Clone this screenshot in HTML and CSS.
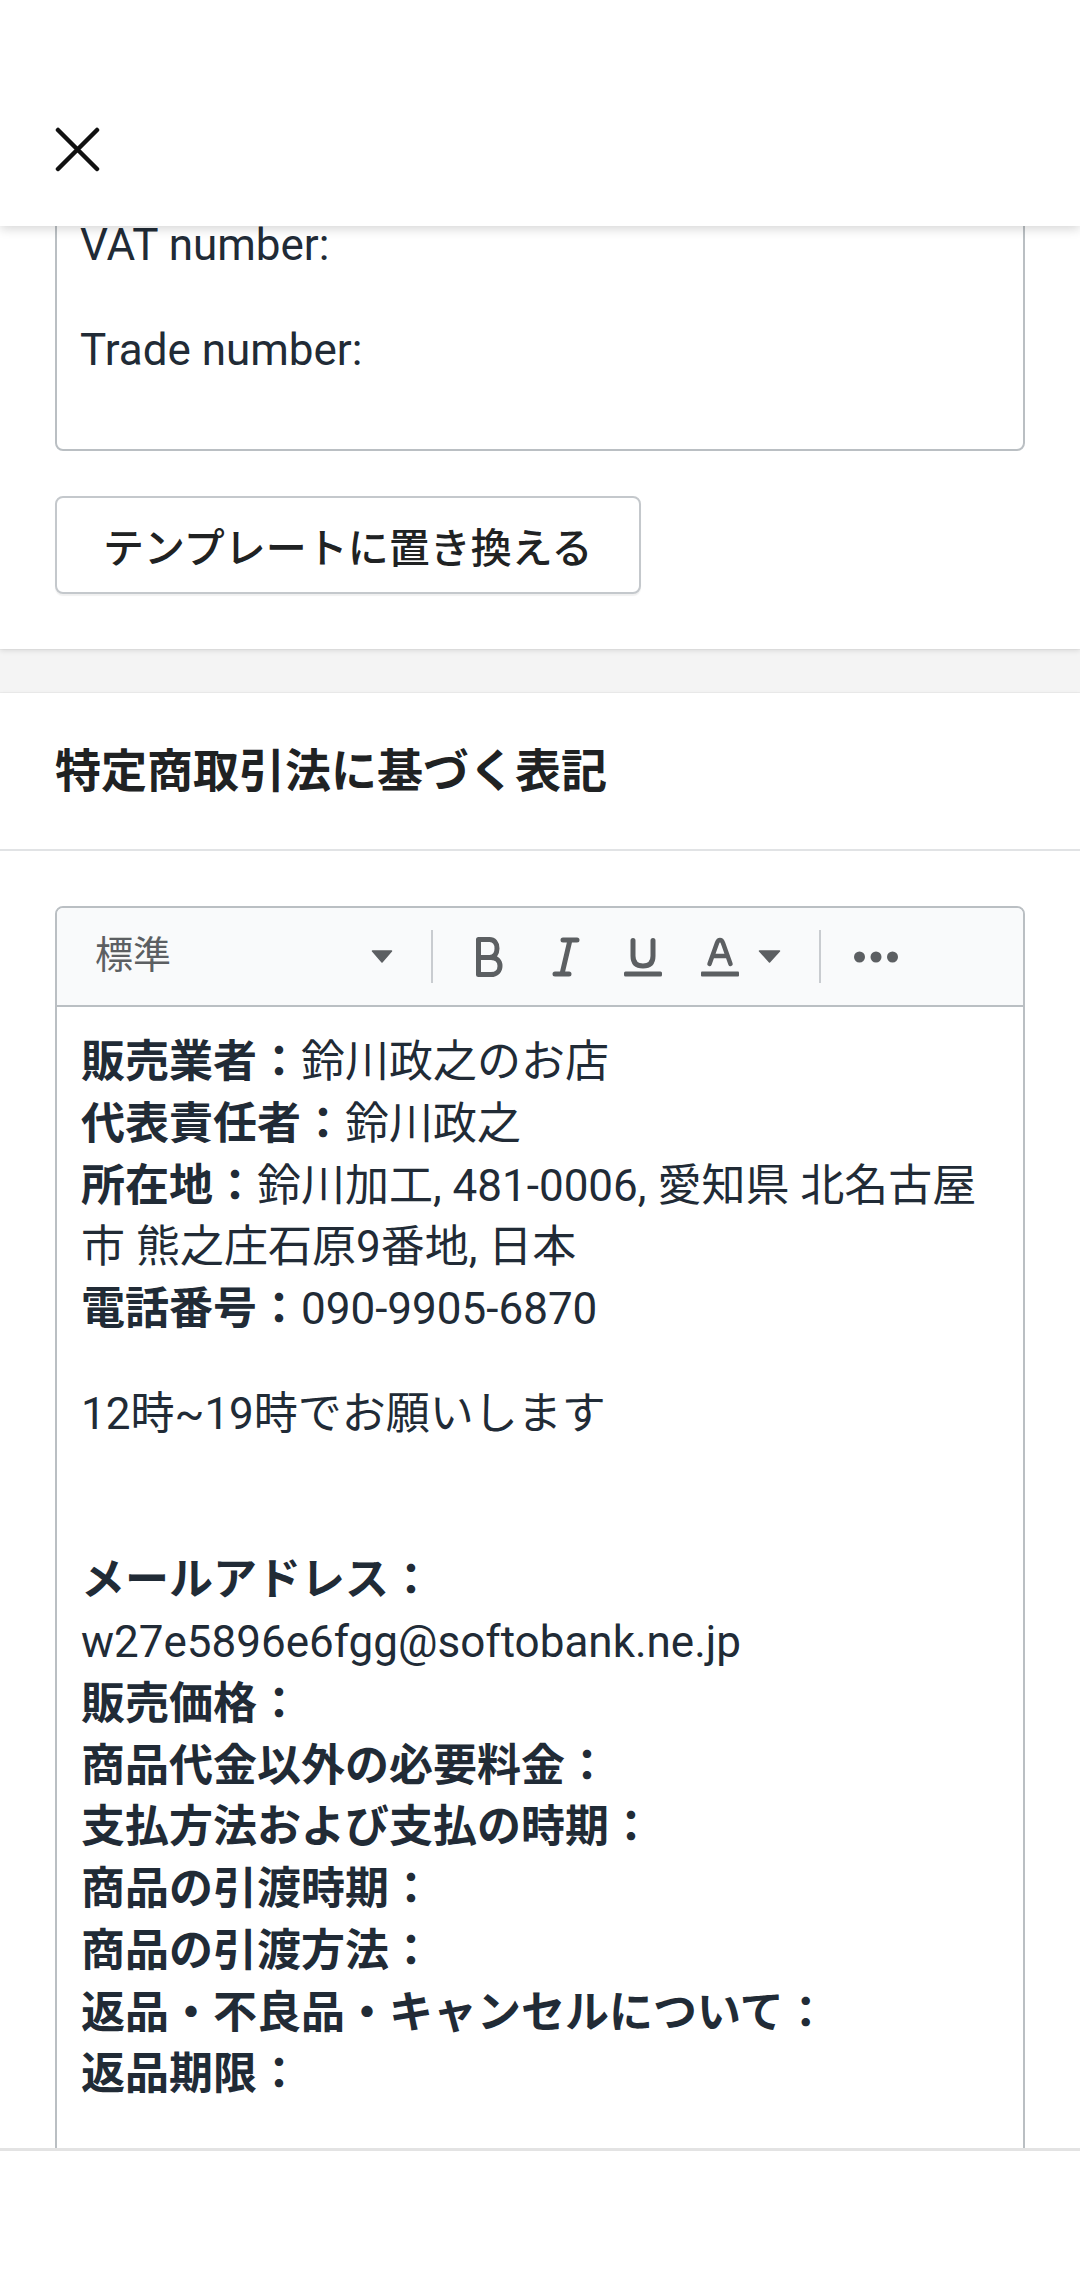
FILE: index.html
```html
<!DOCTYPE html>
<html lang="ja">
<head>
<meta charset="utf-8">
<title>特定商取引法に基づく表記</title>
<link rel="stylesheet" href="styles.css">
</head>
<body>
<div class="app">
  <header class="topbar">
    <button class="close" aria-label="閉じる">
      <svg width="45" height="45" viewBox="0 0 45 45"><path d="M3 3 L42 42 M42 3 L3 42" stroke="#111" stroke-width="4.5" stroke-linecap="round" fill="none"/></svg>
    </button>
  </header>
  <main class="scroll">
    <div class="scroll-inner">
      <section class="card card-first">
        <div class="textbox">
          <div class="tline">VAT number:</div>
          <div class="tline">&nbsp;</div>
          <div class="tline">Trade number:</div>
          <div class="tline">&nbsp;</div>
        </div>
        <button class="btn">テンプレートに置き換える</button>
      </section>
      <section class="card card-legal">
        <div class="card-head"><h2>特定商取引法に基づく表記</h2></div>
        <div class="card-body">
          <div class="editor">
            <div class="toolbar">
              <div class="fmt">
                <span class="fmt-label">標準</span>
                <svg class="tri" width="22" height="13" viewBox="0 0 22 13"><path d="M1.5 1 H20.5 L11 12 Z" fill="#5c5f62" stroke="#5c5f62" stroke-width="1.5" stroke-linejoin="round"/></svg>
              </div>
              <span class="sep"></span>
              <svg class="ic ic-b" width="28" height="40" viewBox="0 0 28 40"><path d="M3.5 2.5 V37.5 H16 C21.5 37.5 25 34 25 29 C25 24 21.5 20.5 16 20.5 H3.5 M3.5 20.5 H14.5 C19 20.5 22 17 22 11.5 C22 6 19 2.5 14.5 2.5 H3.5 Z" fill="none" stroke="#5c5f62" stroke-width="5" stroke-linejoin="round" stroke-linecap="round"/></svg>
              <svg class="ic ic-i" width="28" height="40" viewBox="0 0 28 40"><path d="M11 3 H25 M3 37 H17 M18 3 L10 37" fill="none" stroke="#5c5f62" stroke-width="5" stroke-linecap="round"/></svg>
              <svg class="ic ic-u" width="40" height="40" viewBox="0 0 40 40"><path d="M10 3.5 V19 C10 25.5 13.5 29 20 29 C26.5 29 30 25.5 30 19 V3.5" fill="none" stroke="#5c5f62" stroke-width="5" stroke-linecap="round"/><rect x="1" y="34.5" width="38" height="5" rx="1.5" fill="#5c5f62"/></svg>
              <svg class="ic ic-a" width="38" height="40" viewBox="0 0 38 40"><path d="M8.5 27 L16 6 C17.5 2 20.5 2 22 6 L29.5 27 M11.5 19 H26.5" fill="none" stroke="#5c5f62" stroke-width="4.5" stroke-linecap="round" stroke-linejoin="round"/><rect x="0" y="34.5" width="38" height="5" rx="1" fill="#5c5f62"/></svg>
              <svg class="ic ic-tri" width="23" height="13" viewBox="0 0 23 13"><path d="M1.5 1 H21.5 L11.5 12 Z" fill="#5c5f62" stroke="#5c5f62" stroke-width="1.5" stroke-linejoin="round"/></svg>
              <span class="sep sep2"></span>
              <svg class="ic ic-more" width="44" height="12" viewBox="0 0 44 12"><circle cx="5.5" cy="6" r="5.5" fill="#5c5f62"/><circle cx="22" cy="6" r="5.5" fill="#5c5f62"/><circle cx="38.5" cy="6" r="5.5" fill="#5c5f62"/></svg>
            </div>
            <div class="content">
              <p><b>販売業者：</b>鈴川政之のお店<br><b>代表責任者：</b>鈴川政之<br><b>所在地：</b>鈴川加工, 481-0006, 愛知県 北名古屋市 熊之庄石原9番地, 日本<br><b>電話番号：</b>090-9905-6870</p>
              <p>12時~19時でお願いします<br><br></p>
              <p><b>メールアドレス：</b><br>w27e5896e6fgg@softobank.ne.jp<br><b>販売価格：</b><br><b>商品代金以外の必要料金：</b><br><b>支払方法および支払の時期：</b><br><b>商品の引渡時期：</b><br><b>商品の引渡方法：</b><br><b>返品・不良品・キャンセルについて：</b><br><b>返品期限：</b></p>
            </div>
          </div>
        </div>
      </section>
    </div>
  </main>
  <footer class="bottombar"></footer>
</div>
</body>
</html>
```
FILE: styles.css
```css
* { box-sizing: border-box; }
html, body {
  margin: 0;
  padding: 0;
  background: #ffffff;
  font-family: "Roboto", "Noto Sans CJK JP", sans-serif;
  color: #212b36;
}
.app {
  width: 1080px;
  height: 2280px;
  display: flex;
  flex-direction: column;
  overflow: hidden;
}
.topbar {
  flex: none;
  height: 226px;
  background: #fff;
  padding: 127px 0 0 55px;
  position: relative;
  z-index: 2;
  box-shadow: 0 3px 10px rgba(0, 0, 0, 0.16);
}
.close {
  display: block;
  width: 45px;
  height: 45px;
  padding: 0;
  margin: 0;
  border: none;
  background: none;
}
.close svg { display: block; }
.scroll {
  flex: 1;
  overflow: hidden;
  background: #f4f4f4;
  position: relative;
  z-index: 1;
}
.scroll-inner {
  margin-top: -40px;
}
.card {
  background: #fff;
  box-shadow: 0 2px 5px rgba(0, 0, 0, 0.1), 0 0 0 1px rgba(0, 0, 0, 0.03);
}
.card-first {
  padding: 0 55px 55px;
  margin-bottom: 44px;
}
.textbox {
  border: 2px solid #babfc3;
  border-radius: 8px;
  padding: 31px 23px 20px;
  font-size: 44px;
  line-height: 52.5px;
  color: #212b36;
}
.tline { white-space: pre; }
.btn {
  display: block;
  margin-top: 45px;
  height: 98px;
  padding: 0 46px;
  background: #fff;
  border: 2px solid #c4c8cc;
  border-radius: 8px;
  box-shadow: 0 2px 1px rgba(0, 0, 0, 0.06);
  font-family: "Roboto", "Noto Sans CJK JP", sans-serif;
  font-size: 41px;
  font-weight: 500;
  color: #202223;
}
.card-head {
  padding: 50px 55px 50px;
  border-bottom: 2px solid #e1e3e5;
}
.card-head h2 {
  margin: 0;
  font-size: 46px;
  line-height: 56px;
  font-weight: 700;
  color: #202223;
}
.card-body {
  padding: 55px 55px 0;
}
.editor {
  border: 2px solid #babfc3;
  border-radius: 8px 8px 0 0;
}
.toolbar {
  height: 99px;
  background: #f9fafb;
  border-bottom: 2px solid #babfc3;
  border-radius: 6px 6px 0 0;
  display: flex;
  align-items: center;
}
.fmt {
  width: 374px;
  display: flex;
  align-items: center;
  justify-content: space-between;
  padding: 0 38px 0 38px;
}
.fmt-label {
  font-size: 38px;
  color: #5c5f62;
  line-height: 40px;
  margin-top: -4px;
}
.tri { display: block; }
.sep {
  display: block;
  width: 2px;
  height: 53px;
  background: #c9ccd0;
}
.ic { display: block; flex: none; }
.ic-b { margin-left: 42px; }
.ic-i { margin-left: 49px; }
.ic-u { margin-left: 43px; }
.ic-a { margin-left: 38px; }
.ic-tri { margin-left: 19px; }
.sep2 { margin-left: 38px; }
.ic-more { margin-left: 33px; }
.content {
  padding: 25px 24px 120px;
  font-size: 44px;
  line-height: 61.75px;
  color: #212b36;
}
.content p {
  margin: 0 0 43px;
}
.content p:last-child { margin-bottom: 0; }
.content b { font-weight: 700; }
.bottombar {
  flex: none;
  height: 132px;
  background: #fff;
  border-top: 3px solid #e3e3e3;
  position: relative;
  z-index: 2;
}
```
